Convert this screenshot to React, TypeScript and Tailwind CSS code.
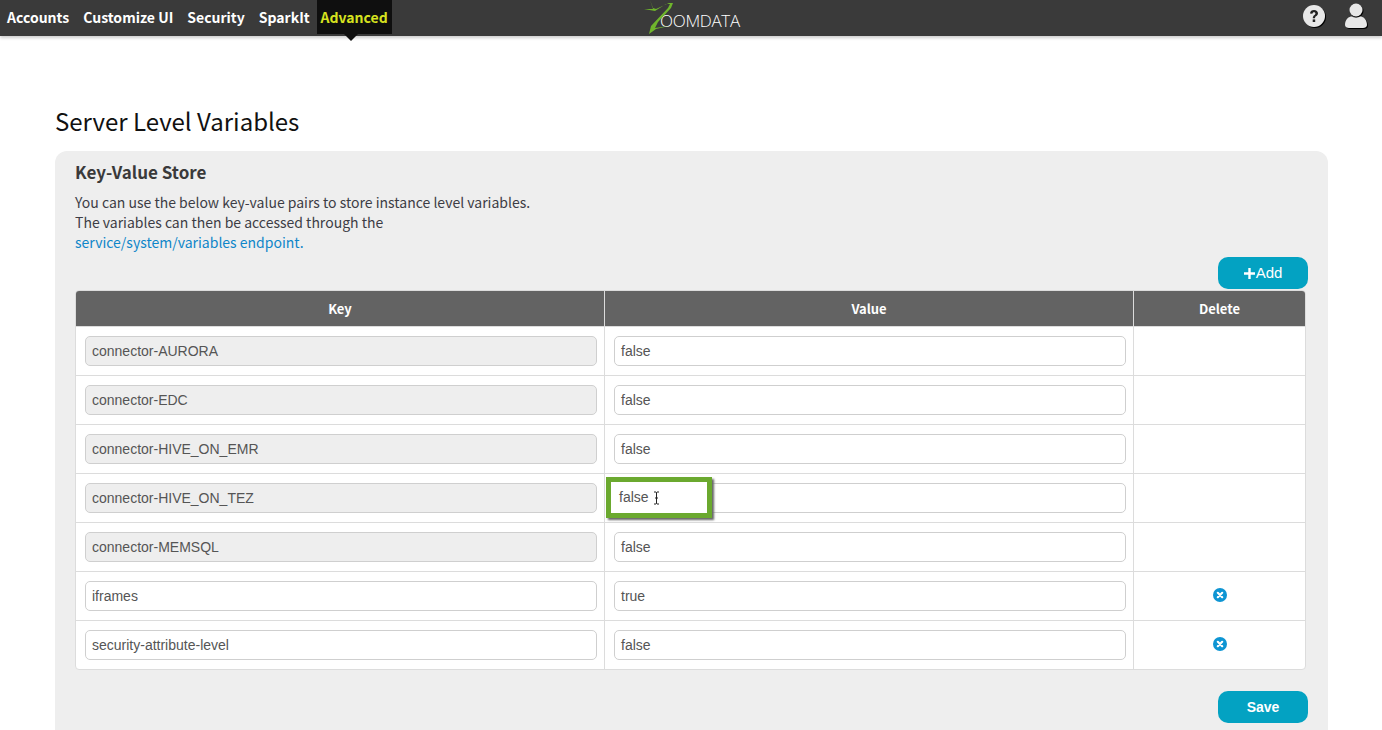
const sans = { fontFamily: '"Noto Sans CJK SC", "Noto Sans", sans-serif' };

const navItems = ['Accounts', 'Customize UI', 'Security', 'SparkIt'];

const rows = [
  { key: 'connector-AURORA', value: 'false', locked: true },
  { key: 'connector-EDC', value: 'false', locked: true },
  { key: 'connector-HIVE_ON_EMR', value: 'false', locked: true },
  { key: 'connector-HIVE_ON_TEZ', value: 'false', locked: true, highlight: true },
  { key: 'connector-MEMSQL', value: 'false', locked: true },
  { key: 'iframes', value: 'true', locked: false },
  { key: 'security-attribute-level', value: 'false', locked: false },
];

function Logo() {
  return (
    <div className="flex items-center h-9 relative w-[100px]">
      <svg width="36" height="36" viewBox="0 0 36 36" className="absolute left-0 top-0">
        <path d="M9 0 L12 9 L3 9 L14 11 L25 4 L29 4 L27 8 L10 26 L8 34 L15 29 L28 26 L14 28 L17 22 L30 8 L32 3 L28 3 L15 9 L12 8 Z" fill="#6fb52c" />
      </svg>
      <span className="ml-[19px] mt-[5px] text-[17px] leading-none tracking-[-0.3px] text-white font-light" style={{ fontFamily: '"Open Sans", sans-serif' }}>
        OOMDATA
      </span>
    </div>
  );
}

function Field({ text, locked }: { text: string; locked?: boolean }) {
  return (
    <div
      className={`h-[30px] flex items-center px-[6px] rounded-[5px] border border-[#cfcfcf] text-[14px] text-[#555] font-['Liberation_Sans',sans-serif] ${
        locked ? 'bg-[#eeeeee]' : 'bg-white'
      }`}
    >
      {text}
    </div>
  );
}

function RemoveIcon() {
  return (
    <svg width="14" height="14" viewBox="0 0 14 14">
      <circle cx="7" cy="7" r="7" fill="#0e95d3" />
      <path d="M4.8 4.8 L9.2 9.2 M9.2 4.8 L4.8 9.2" stroke="#fff" strokeWidth="2.2" strokeLinecap="round" />
    </svg>
  );
}

function Row({ row }: { row: (typeof rows)[number] }) {
  return (
    <div className="flex h-[49px] border-t border-[#dcdcdc] first:border-t-0">
      <div className="w-[529px] pl-[9px] pr-[7px] pt-[9px] border-r border-[#dcdcdc]">
        <Field text={row.key} locked={row.locked} />
      </div>
      <div className="w-[529px] pl-[9px] pr-[7px] pt-[9px] border-r border-[#dcdcdc] relative">
        <Field text={row.value} />
        {row.highlight && (
          <div className="absolute left-[1px] top-[3px] w-[106px] h-[41px] border-[5px] border-[#6ba92f] shadow-[2px_2px_2px_#666] bg-white flex items-center pl-[8px] text-[14px] text-[#555] font-['Liberation_Sans',sans-serif]">
            false
            <svg width="7" height="14" viewBox="0 0 7 14" className="ml-[4px] mt-[1px]">
              <path d="M1 1 H3 L3.5 1.6 L4 1 H6 M3.5 1.6 V12.4 M1 13 H3 L3.5 12.4 L4 13 H6 M2 7 H5" stroke="#222" strokeWidth="1" fill="none" />
            </svg>
          </div>
        )}
      </div>
      <div className="flex-1 flex items-start justify-center pt-[16px]">
        {!row.locked && <RemoveIcon />}
      </div>
    </div>
  );
}

export default function App() {
  return (
    <div className="h-[730px] overflow-hidden bg-white relative" style={sans}>
      <header className="h-9 bg-[#3a3a3a] flex items-start justify-between shadow-[0_2px_3px_rgba(0,0,0,0.2)] relative">
        <nav className="flex pl-[7px] text-[14px] font-semibold text-white leading-[34px]">
          {navItems.map((item) => (
            <a key={item} className="mr-[14px]">
              {item}
            </a>
          ))}
          <a className="-ml-[7px] relative w-[75px] h-[34px] bg-[#0f0f0f] text-[#d6e21f] text-center">
            Advanced
            <span className="absolute left-[27px] top-[34px] w-0 h-0 border-x-[7px] border-x-transparent border-t-[7px] border-t-[#0f0f0f]" />
          </a>
        </nav>
        <div className="absolute left-[641px] top-0">
          <Logo />
        </div>
        <div className="flex items-center gap-[18px] pr-[14px] pt-[3px]">
          <svg width="24" height="24" viewBox="0 0 24 24" className="drop-shadow-[1px_1px_0_#000]">
            <circle cx="12" cy="12" r="11" fill="#e8e8e8" />
            <path d="M8 9.5 C8 7 10 6 12 6 C14.4 6 16 7.4 16 9.3 C16 12 13 12 13 14.2 H10.8 C10.8 11 13.4 11 13.4 9.4 C13.4 8.6 12.8 8.2 12 8.2 C11 8.2 10.5 8.8 10.4 9.8 Z" fill="#222" />
            <rect x="10.7" y="15.4" width="2.5" height="2.6" fill="#222" />
          </svg>
          <svg width="24" height="26" viewBox="0 0 24 26" className="drop-shadow-[1px_1px_0_#000]">
            <ellipse cx="12" cy="7" rx="6.5" ry="6.5" fill="#e8e8e8" />
            <path d="M1 22 C1 16 5 13.5 8 13.5 C10 15 14 15 16 13.5 C19 13.5 23 16 23 22 C23 24 21 25 19 25 H5 C3 25 1 24 1 22 Z" fill="#e8e8e8" />
          </svg>
        </div>
      </header>

      <main className="px-[55px] w-[1328px] box-content">
        <h1 className="mt-[69px] text-[24px] leading-[32px] text-[#111]">Server Level Variables</h1>
        <section className="w-[1273px] mt-[14px] h-[590px] bg-[#eeeeee] rounded-[12px] px-[20px] pt-[9px]">
          <h2 className="text-[17px] leading-6 font-bold text-[#3a3a3a]">Key-Value Store</h2>
          <div className="mt-[8px] text-[14px] leading-[20px] text-[#3d3d45]">
            <p>You can use the below key-value pairs to store instance level variables.</p>
            <p>The variables can then be accessed through the</p>
            <a className="text-[#0e86c9]">service/system/variables endpoint.</a>
          </div>
          <div className="flex justify-end mt-[5px]">
            <button className="w-[90px] h-8 rounded-[10px] bg-[#03a2c2] text-white text-[15px] font-['Liberation_Sans',sans-serif] flex items-center justify-center">
              <svg width="11" height="11" viewBox="0 0 11 11" className="mr-[1px]">
                <path d="M5.5 0 V11 M0 5.5 H11" stroke="#fff" strokeWidth="2.4" />
              </svg>
              Add
            </button>
          </div>
          <div className="mt-[1px] w-[1231px] rounded-[4px] border border-[#dcdcdc] bg-white overflow-hidden">
            <div className="flex h-[36px] -mt-px bg-[#636363] text-white text-[13px] font-bold leading-[37px] text-center">
              <div className="w-[529px] border-r border-[#dcdcdc]">Key</div>
              <div className="w-[529px] border-r border-[#dcdcdc]">Value</div>
              <div className="flex-1">Delete</div>
            </div>
            {rows.map((row) => (
              <Row key={row.key} row={row} />
            ))}
          </div>
          <div className="flex justify-end mt-[21px]">
            <button className="w-[90px] h-8 rounded-[10px] bg-[#03a2c2] text-white text-[14px] font-bold font-['Liberation_Sans',sans-serif]">
              Save
            </button>
          </div>
        </section>
      </main>
    </div>
  );
}
